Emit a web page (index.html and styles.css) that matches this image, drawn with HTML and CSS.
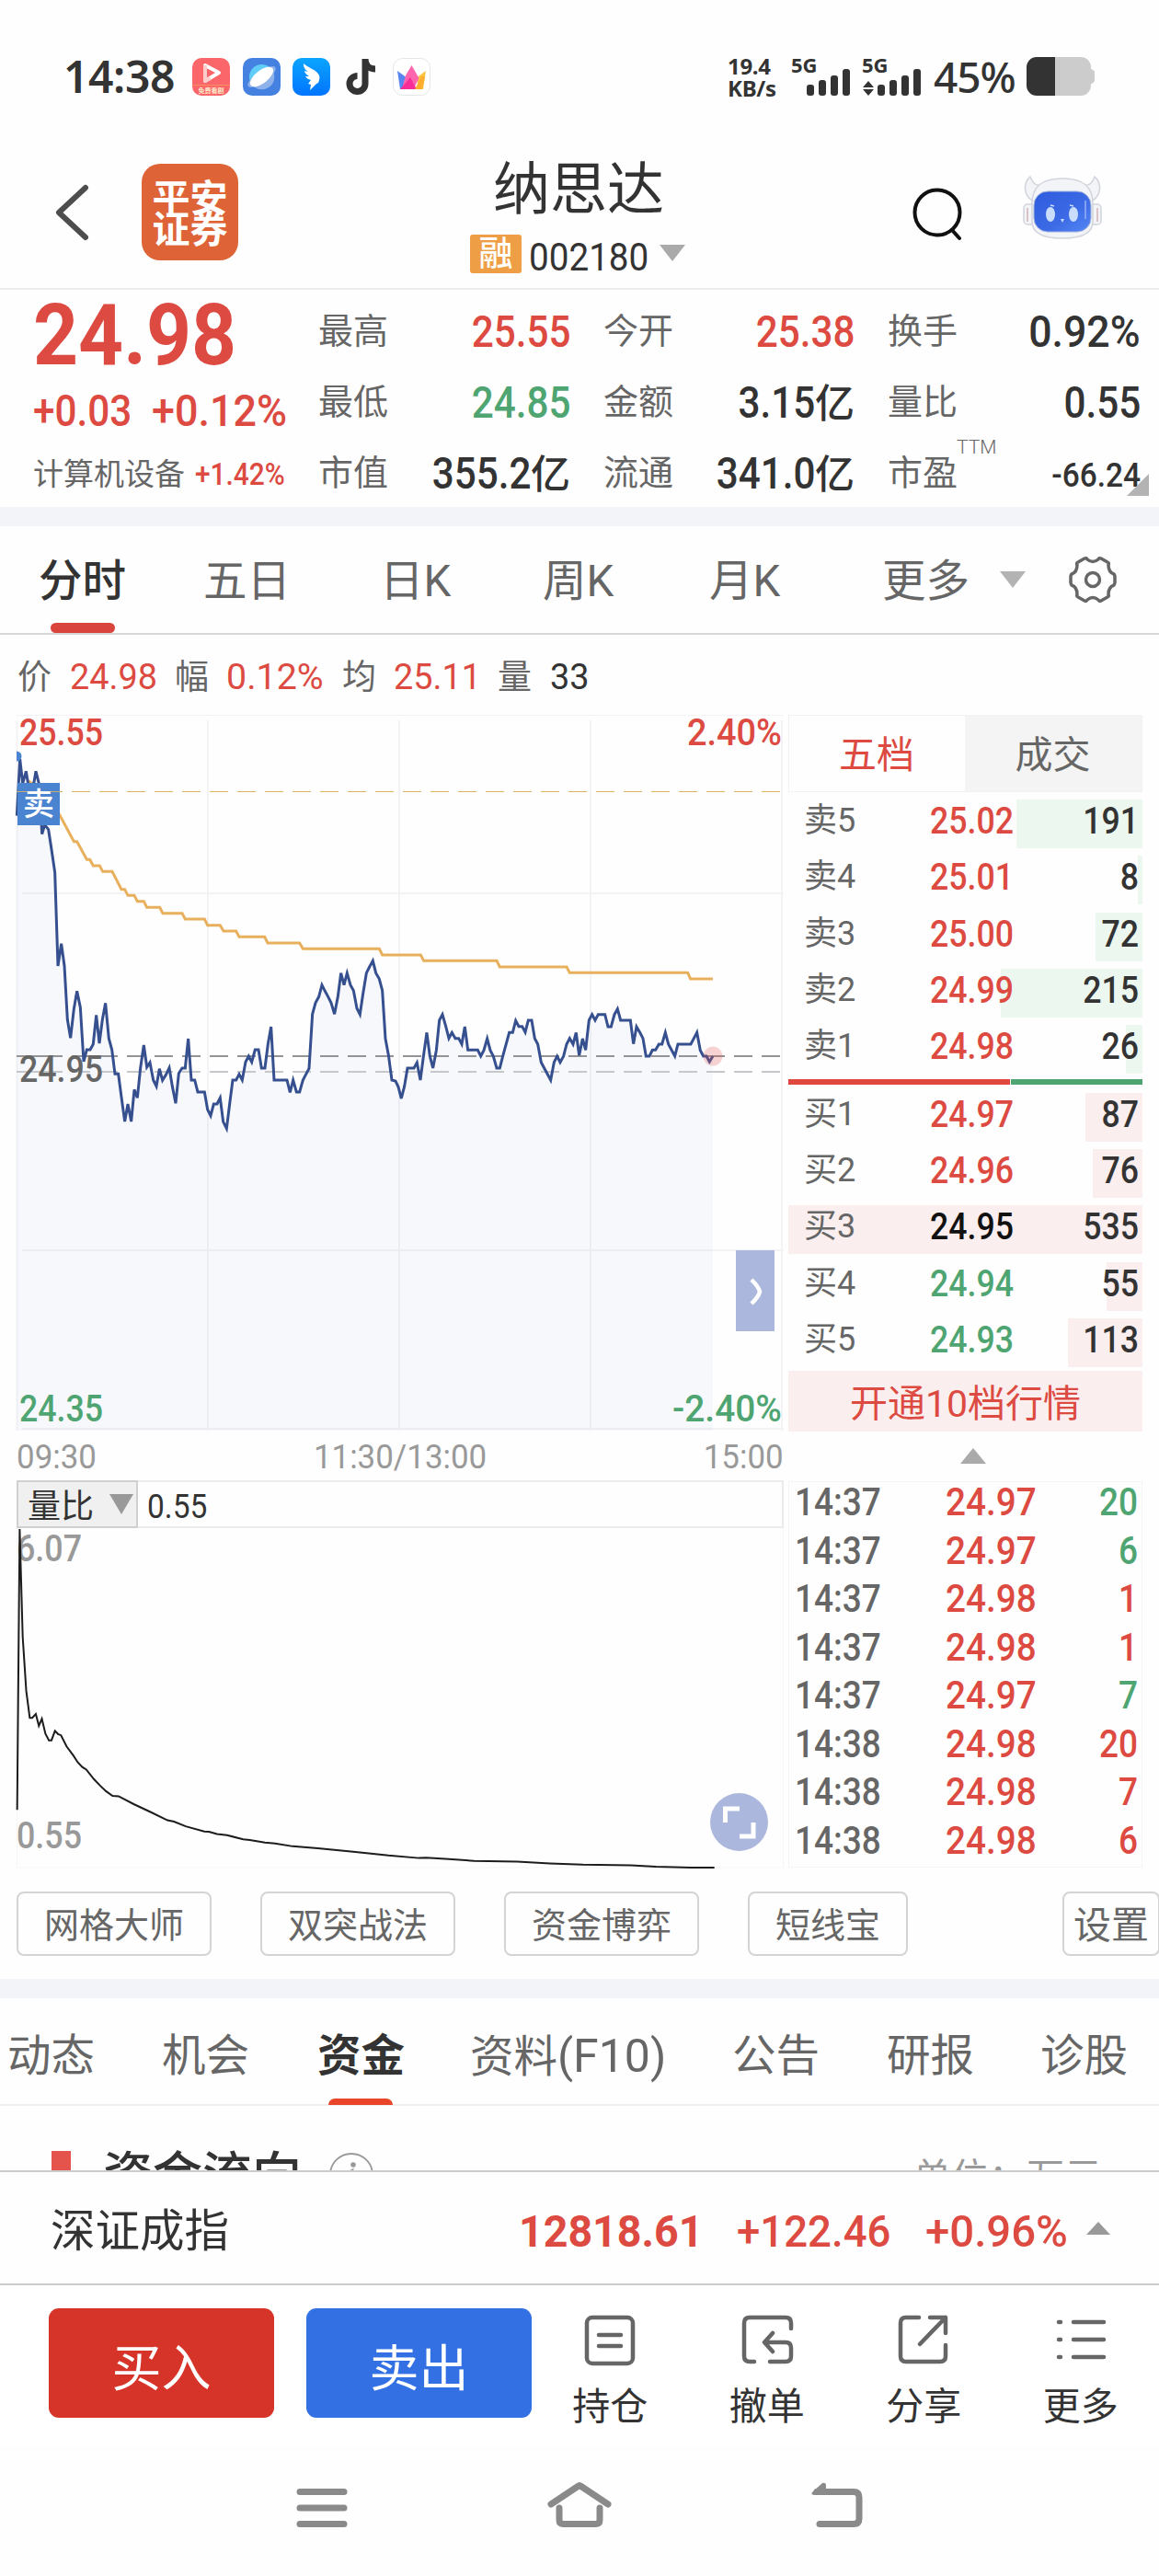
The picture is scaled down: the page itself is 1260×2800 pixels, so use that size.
FILE: index.html
```html
<!DOCTYPE html>
<html lang="zh-CN">
<head>
<meta charset="utf-8">
<title>纳思达 002180</title>
<link rel="stylesheet" href="styles.css">
</head>
<body>
<div class="status">
  <span class="clock">14:38</span>
  <div class="apps">
    <svg width="41" height="41" viewBox="0 0 41 41"><rect width="41" height="41" rx="10" fill="#fb666b"/><path d="M14 8l15 8-15 9z" fill="none" stroke="#fff" stroke-width="4" stroke-linejoin="round"/><path d="M14 8v17l6-3" fill="none" stroke="#fcc" stroke-width="4" stroke-linejoin="round"/><path d="M0 29.500h41" stroke="#f99060" stroke-width="1"/><text x="20.500" y="38" class="mini" text-anchor="middle">免费看剧</text></svg>
    <svg width="41" height="41" viewBox="0 0 41 41"><rect width="41" height="41" rx="10" fill="#4581e0"/><circle cx="20.500" cy="20.500" r="13.500" fill="#60cdf8"/><path d="M8 26L33 15a13.500 13.500 0 0 1-22 15z" fill="#8fb2ea"/><ellipse cx="20.500" cy="20.500" rx="18" ry="6" transform="rotate(-35 20.500 20.500)" fill="#8fb2ea"/><ellipse cx="20.500" cy="20.500" rx="15" ry="7" transform="rotate(-38 20.500 20.500)" fill="#fff"/></svg>
    <svg width="41" height="41" viewBox="0 0 41 41"><defs><linearGradient id="wing" x1="0" y1="0" x2="0" y2="1"><stop offset="0" stop-color="#0ba5ff"/><stop offset="1" stop-color="#0074ff"/></linearGradient></defs><rect width="41" height="41" rx="10" fill="url(#wing)"/><path d="M12 6c5 5 15 7 17 13 1 3 0 5-1 8l-2 1-7 7 1-6-3-1 3-4c-3-1-5-2-6-4l4 0c-3-2-5-4-5-6l4 1c-4-3-5-5-5-9z" fill="#fff"/></svg>
    <svg width="41" height="41" viewBox="0 0 41 41"><path d="M24 1v27a8.500 8.500 0 1 1-8.500-8.500M24 1c0 7 5 11 11 11" fill="none" stroke="#333" stroke-width="7"/></svg>
    <svg width="41" height="41" viewBox="0 0 41 41"><rect x=".5" y=".5" width="40" height="40" rx="10" fill="#fff" stroke="#e6e6e6"/><path d="M5 14l11 8-6 12H8z" fill="#5b86f2"/><path d="M36 14l-11 8 5 12h3z" fill="#fbc443"/><path d="M20.500 8l8 14-6 12H10l4-15z" fill="#ff66ae"/><path d="M8 34l11-13 7 13z" fill="#f72d9a"/><path d="M24 34l7-14 4 0-3 14z" fill="#ffad2f"/></svg>
  </div>
  <div class="rate"><span>19.4</span><span>KB/s</span></div>
  <svg class="signals" width="142" height="44" viewBox="860 61 142 44">
    <g fill="#333"><text x="860" y="79" class="gen">5G</text><rect x="877" y="92" width="8" height="12" rx="3"/><rect x="890" y="87" width="8" height="17" rx="3"/><rect x="903" y="82" width="8" height="22" rx="3"/><rect x="916" y="75" width="8" height="29" rx="3"/>
    <text x="937" y="79" class="gen">5G</text><path d="M938 95l6-7 6 7zM938 97h12l-6 7z"/><rect x="954" y="92" width="8" height="12" rx="3"/><rect x="967" y="87" width="8" height="17" rx="3"/><rect x="980" y="82" width="8" height="22" rx="3"/><rect x="993" y="75" width="8" height="29" rx="3"/></g>
  </svg>
  <span class="pct">45%</span>
  <svg width="74" height="42" viewBox="0 0 74 42"><path d="M11 0H31V42H11a11 11 0 0 1-11-11V11A11 11 0 0 1 11 0z" fill="#333"/><path d="M31 0H59a11 11 0 0 1 11 11v2q4 1 4 4v8q0 3-4 4v2a11 11 0 0 1-11 11H31z" fill="#ccc"/></svg>
</div>

<header class="head">
  <svg class="back" width="40" height="64" viewBox="0 0 40 64"><path d="M34 5L5 32l29 27" fill="none" stroke="#4d4d4d" stroke-width="6" stroke-linecap="round" stroke-linejoin="round"/></svg>
  <div class="logo"><span>平安</span><span>证券</span></div>
  <div class="title"><h1>纳思达</h1>
    <div class="code"><b>融</b><span class="n">002180</span><svg width="28" height="18" viewBox="0 0 28 18"><path d="M0 0h28L14 18z" fill="#aaa"/></svg></div>
  </div>
  <svg class="search" width="60" height="60" viewBox="0 0 60 60"><circle cx="28" cy="28" r="24.500" fill="none" stroke="#111" stroke-width="4"/><path d="M44 47l8 9" stroke="#111" stroke-width="4" stroke-linecap="round"/></svg>
  <svg class="robot" width="86" height="70" viewBox="0 0 86 70"><defs><linearGradient id="face" x1="0" y1="0" x2="1" y2="1"><stop offset="0" stop-color="#2d5bdd"/><stop offset=".6" stop-color="#3d6be6"/><stop offset="1" stop-color="#5588f5"/></linearGradient></defs>
    <g fill="#f3f4f8" stroke="#d2d4dc" stroke-width="1.500"><path d="M12 28C0 22 0 8 8 1c3 8 7 11 14 8zM74 28C86 22 86 8 78 1c-3 8-7 11-14 8z"/><rect x="1" y="31" width="12" height="22" rx="4"/><rect x="73" y="31" width="12" height="22" rx="4"/><path d="M43 3c24 0 33 10 33 27v20c0 12-12 18-33 18S10 62 10 50V30C10 13 19 3 43 3z"/></g>
    <path d="M5 35v15M81 35v15" stroke="#d9c3c6" stroke-width="2"/><rect x="12" y="17" width="62" height="44" rx="15" fill="url(#face)" stroke="#a5b4dd"/><path d="M68 27v20" stroke="#82a1f2" stroke-width="2"/><ellipse cx="30" cy="42" rx="5" ry="8" fill="#c9dcfb"/><ellipse cx="55" cy="42" rx="5" ry="8" fill="#c9dcfb"/><path d="M30 32l4 1M51 32l4 1" stroke="#c9dcfb" stroke-width="1.500"/><path d="M41 47h4l-2 4z" fill="#c9dcfb"/></svg>
</header>

<section class="quote">
  <div class="now red"><div class="last"><span class="n">24.98</span></div><div class="chg"><span class="n">+0.03</span><span class="n">+0.12%</span></div><div class="sector"><i>计算机设备</i><span class="n">+1.42%</span></div></div>
  <dl>
    <dt>最高</dt><dd class="red"><span class="n">25.55</span></dd><dt>今开</dt><dd class="red"><span class="n">25.38</span></dd><dt>换手</dt><dd><span class="n wide">0.92%</span></dd>
    <dt>最低</dt><dd class="green"><span class="n">24.85</span></dd><dt>金额</dt><dd><span class="n">3.15</span>亿</dd><dt>量比</dt><dd><span class="n">0.55</span></dd>
    <dt>市值</dt><dd><span class="n">355.2</span>亿</dd><dt>流通</dt><dd><span class="n">341.0</span>亿</dd><dt class="pe">市盈<sup>TTM</sup></dt><dd class="small"><span class="n wide">-66.24</span></dd>
  </dl>
  <svg class="corner" width="24" height="24" viewBox="0 0 24 24"><path d="M24 0v24H0z" fill="#b3b3b3"/></svg>
</section>
<div class="band"></div>

<nav class="periods">
  <span class="on">分时</span><span>五日</span><span>日K</span><span>周K</span><span>月K</span><span>更多</span>
  <svg class="drop" width="28" height="18" viewBox="0 0 28 18"><path d="M0 0h28L14 18z" fill="#b3b3b3"/></svg>
  <svg width="52" height="52" viewBox="0 0 52 52" fill="none" stroke="#666" stroke-width="3.500" stroke-linejoin="round"><path d="M17 3q2-1 3 1 6 5 12 0 1-2 3-1l7 4q2 1 1 3 0 8 6 10 1 1 1 3v6q0 2-1 3-6 2-6 10 1 2-1 3l-7 4q-2 1-3-1-6-5-12 0-1 2-3 1l-7-4q-2-1-1-3 0-8-6-10-1-1-1-3v-6q0-2 1-3 6-2 6-10-1-2 1-3z"/><circle cx="26" cy="26" r="7.500"/></svg>
</nav>
<div class="legend"><i>价</i><span class="n red">24.98</span><i>幅</i><span class="n red wide">0.12%</span><i>均</i><span class="n red">25.11</span><i>量</i><span class="n">33</span></div>

<main class="market">
  <div class="charts">
    <svg class="intraday" width="834" height="780" viewBox="18 776 834 780">
      <g stroke="#f3f3f5" stroke-width="2" fill="none"><path d="M18 777.500H852" stroke-width="1"/><path d="M24 971H852M24 1359H852M24 1553H852M226 783V1555M434 783V1555M642 783V1555M850 783V1555M18.500 783V1555"/></g>
      <g transform="translate(0 760) scale(.33333)">
        <path id="area" fill="#4478d0" fill-opacity=".045" d="M55 2385V380L65 195 74 275 85 235 94 290 106 300 117 235 127 275 137 440 146 410 158 425 168 490 179 565 189 870 200 797 210 870 220 1045 230 1105 241 1010 251 952 262 1005 273 1182 283 1143 294 1143 304 1125 314 1030 324 1122 334 1045 344 991 355 1106 365 1143 375 1222 386 1222 396 1298 407 1377 417 1320 428 1377 438 1273 448 1300 458 1203 469 1128 479 1200 489 1185 500 1242 510 1262 520 1205 530 1243 541 1225 552 1202 562 1262 573 1318 583 1220 594 1203 604 1203 614 1107 624 1242 635 1242 645 1281 667 1281 677 1338 687 1358 697 1320 708 1320 718 1300 728 1378 739 1400 749 1320 759 1242 770 1242 780 1223 790 1242 801 1183 811 1164 821 1183 832 1143 843 1143 853 1203 864 1203 874 1125 884 1068 894 1242 936 1242 946 1282 956 1242 967 1281 977 1281 988 1242 998 1223 1008 1204 1019 1027 1029 990 1040 970 1050 932 1060 952 1070 970 1080 990 1091 1027 1102 970 1112 893 1122 932 1132 893 1143 932 1153 950 1164 1008 1174 1028 1184 960 1195 893 1205 873 1216 853 1226 893 1237 912 1247 950 1257 1107 1267 1160 1278 1242 1290 1245 1299 1264 1309 1302 1319 1262 1329 1203 1350 1203 1360 1185 1371 1242 1381 1165 1392 1087 1402 1164 1412 1203 1423 1145 1433 1047 1443 1028 1454 1067 1464 1106 1474 1087 1485 1106 1496 1106 1506 1125 1516 1068 1526 1144 1558 1144 1568 1164 1578 1145 1589 1107 1599 1145 1609 1164 1620 1203 1630 1203 1640 1164 1661 1087 1672 1087 1682 1048 1692 1067 1703 1067 1713 1086 1723 1047 1734 1047 1744 1106 1754 1125 1765 1184 1775 1203 1796 1242 1807 1184 1817 1164 1827 1184 1838 1164 1848 1125 1858 1106 1869 1125 1879 1087 1889 1162 1900 1107 1910 1144 1921 1047 1931 1028 1941 1047 1951 1028 1973 1028 1983 1068 1993 1068 2004 1028 2014 1010 2024 1047 2056 1047 2066 1124 2076 1068 2087 1087 2097 1106 2107 1164 2118 1164 2128 1144 2138 1144 2149 1125 2159 1125 2170 1087 2180 1125 2201 1164 2211 1125 2253 1125 2263 1106 2273 1087 2284 1145 2294 1164 2304 1164 2314 1182 2325 1164V2385z"/>
      </g>
      <g stroke-width="1.200" stroke="#dcb462"><path d="M18 860.500H68"/><path d="M78 860.500H850" stroke-dasharray="20 10"/></g>
      <g stroke-width="2" stroke="#949496"><path d="M18 1148H68"/><path d="M78 1148H850" stroke-dasharray="20 10"/></g>
      <g stroke-width="2" stroke="#c6c7ca"><path d="M18 1165H68"/><path d="M78 1165H850" stroke-dasharray="20 10"/></g>
      <g transform="translate(0 760) scale(.33333)" fill="none" stroke-width="9">
        <path stroke="#e8b05c" d="M90 265L105 275 150 310 195 378 241 464 251 464 283 523 293 523 304 543 325 543 335 562 366 562 396 620 407 620 417 640 438 640 448 659 469 659 479 679 521 679 531 698 594 698 604 717 667 717 677 737 718 737 729 756 770 756 780 775 863 775 873 795 977 795 988 814 1237 814 1247 834 1372 834 1382 853 1620 853 1630 873 1848 873 1858 892 2243 892 2252 912 2325 912"/>
        <path stroke="#36508f" d="M55 380L65 195 74 275 85 235 94 290 106 300 117 235 127 275 137 440 146 410 158 425 168 490 179 565 189 870 200 797 210 870 220 1045 230 1105 241 1010 251 952 262 1005 273 1182 283 1143 294 1143 304 1125 314 1030 324 1122 334 1045 344 991 355 1106 365 1143 375 1222 386 1222 396 1298 407 1377 417 1320 428 1377 438 1273 448 1300 458 1203 469 1128 479 1200 489 1185 500 1242 510 1262 520 1205 530 1243 541 1225 552 1202 562 1262 573 1318 583 1220 594 1203 604 1203 614 1107 624 1242 635 1242 645 1281 667 1281 677 1338 687 1358 697 1320 708 1320 718 1300 728 1378 739 1400 749 1320 759 1242 770 1242 780 1223 790 1242 801 1183 811 1164 821 1183 832 1143 843 1143 853 1203 864 1203 874 1125 884 1068 894 1242 936 1242 946 1282 956 1242 967 1281 977 1281 988 1242 998 1223 1008 1204 1019 1027 1029 990 1040 970 1050 932 1060 952 1070 970 1080 990 1091 1027 1102 970 1112 893 1122 932 1132 893 1143 932 1153 950 1164 1008 1174 1028 1184 960 1195 893 1205 873 1216 853 1226 893 1237 912 1247 950 1257 1107 1267 1160 1278 1242 1290 1245 1299 1264 1309 1302 1319 1262 1329 1203 1350 1203 1360 1185 1371 1242 1381 1165 1392 1087 1402 1164 1412 1203 1423 1145 1433 1047 1443 1028 1454 1067 1464 1106 1474 1087 1485 1106 1496 1106 1506 1125 1516 1068 1526 1144 1558 1144 1568 1164 1578 1145 1589 1107 1599 1145 1609 1164 1620 1203 1630 1203 1640 1164 1661 1087 1672 1087 1682 1048 1692 1067 1703 1067 1713 1086 1723 1047 1734 1047 1744 1106 1754 1125 1765 1184 1775 1203 1796 1242 1807 1184 1817 1164 1827 1184 1838 1164 1848 1125 1858 1106 1869 1125 1879 1087 1889 1162 1900 1107 1910 1144 1921 1047 1931 1028 1941 1047 1951 1028 1973 1028 1983 1068 1993 1068 2004 1028 2014 1010 2024 1047 2056 1047 2066 1124 2076 1068 2087 1087 2097 1106 2107 1164 2118 1164 2128 1144 2138 1144 2149 1125 2159 1125 2170 1087 2180 1125 2201 1164 2211 1125 2253 1125 2263 1106 2273 1087 2284 1145 2294 1164 2304 1164 2314 1182 2325 1164"/>
      </g>
      <circle cx="775" cy="1148" r="10.500" fill="#e25050" fill-opacity=".25"/>
      <path d="M18 816.500a5.500 5.500 0 0 1 0 11z" fill="#4a83cf"/>
      <rect x="19" y="851" width="46" height="46" fill="#4a83cf"/><path d="M18 860.500H68" stroke="#c8ab74"/>
      <text x="42" y="886" class="sell" text-anchor="middle">卖</text>
      <g class="num"><text x="21" y="809.500" fill="#dc4a41" textLength="91" lengthAdjust="spacingAndGlyphs">25.55</text><text x="747" y="809.500" fill="#dc4a41" textLength="103" lengthAdjust="spacingAndGlyphs">2.40%</text><text x="21" y="1176" fill="#666" textLength="91" lengthAdjust="spacingAndGlyphs">24.95</text><text x="21" y="1544.500" fill="#4fa572" textLength="91" lengthAdjust="spacingAndGlyphs">24.35</text><text x="731" y="1544.500" fill="#4fa572" textLength="119" lengthAdjust="spacingAndGlyphs">-2.40%</text></g>
      <rect x="800" y="1359" width="42" height="88" fill="#abb7dc"/><path d="M817 1391q8 8 9 13-1 5-9 13" fill="none" stroke="#fff" stroke-width="4.500"/>
    </svg>
    <div class="times"><span class="n">09:30</span><span class="n">11:30/13:00</span><span class="n">15:00</span></div>
    <div class="indicator"><div class="pick"><span>量比</span><svg width="26" height="22" viewBox="0 0 26 22"><path d="M0 0h26L13 22z" fill="#999"/></svg></div><span class="n">0.55</span></div>
    <svg class="ratio" width="834" height="370" viewBox="18 1661 834 370">
      <path d="M18.500 1661V2030H851.500V1661" fill="none" stroke="#f5f5f5"/>
      <g class="num" fill="#999"><text x="18" y="1697" textLength="71" lengthAdjust="spacingAndGlyphs">6.07</text><text x="18" y="2009" textLength="71" lengthAdjust="spacingAndGlyphs">0.55</text></g>
      <g transform="translate(0 1600) scale(.5485 .3448)"><path vector-effect="non-scaling-stroke" fill="none" stroke="#1c1c1c" stroke-width="2" d="M34 1065L39 180 45 520 52 690 59 775 64 775 71 763 77 800 83 778 90 825 97 846 102 846 109 816 115 826 121 830 132 865 145 893 154 915 163 930 171 938 186 968 198 988 210 1006 223 1021 235 1022 265 1047 300 1073 332 1098 345 1102 368 1117 405 1133 414 1134 430 1141 450 1145 482 1158 495 1160 525 1168 545 1171 580 1180 630 1186 700 1197 770 1209 830 1217 845 1216 890 1220 940 1226 1025 1228 1090 1234 1155 1238 1250 1240 1300 1244 1370 1247 1416 1247"/></g>
      <circle cx="803.500" cy="1980.500" r="31.500" fill="#abb7dc"/><path d="M788.500 1981v-15H804M819 1981v15H804" fill="none" stroke="#fff" stroke-width="5"/>
    </svg>
  </div>

  <aside class="side">
    <div class="booktabs"><span class="on">五档</span><span>成交</span></div>
    <div class="book">
      <div class="lv s"><i>卖5</i><span class="n red">25.02</span><span class="n q">191</span><em style="width:137px"></em></div>
      <div class="lv s"><i>卖4</i><span class="n red">25.01</span><span class="n q">8</span><em style="width:5px"></em></div>
      <div class="lv s"><i>卖3</i><span class="n red">25.00</span><span class="n q">72</span><em style="width:51px"></em></div>
      <div class="lv s"><i>卖2</i><span class="n red">24.99</span><span class="n q">215</span><em style="width:154px"></em></div>
      <div class="lv s"><i>卖1</i><span class="n red">24.98</span><span class="n q">26</span><em style="width:18px"></em></div>
      <div class="split"><b></b><u></u></div>
      <div class="lv b"><i>买1</i><span class="n red">24.97</span><span class="n q">87</span><em style="width:62px"></em></div>
      <div class="lv b"><i>买2</i><span class="n red">24.96</span><span class="n q">76</span><em style="width:54px"></em></div>
      <div class="lv b"><i>买3</i><span class="n black">24.95</span><span class="n q">535</span><em style="width:385px"></em></div>
      <div class="lv b"><i>买4</i><span class="n green">24.94</span><span class="n q">55</span><em style="width:39px"></em></div>
      <div class="lv b"><i>买5</i><span class="n green">24.93</span><span class="n q">113</span><em style="width:81px"></em></div>
    </div>
    <div class="more10">开通10档行情</div>
    <div class="fold"><svg width="28" height="17" viewBox="0 0 28 17"><path d="M0 17h28L14 0z" fill="#aaa"/></svg></div>
    <div class="ticks">
      <div><span class="n">14:37</span><span class="n red">24.97</span><span class="n green">20</span></div>
      <div><span class="n">14:37</span><span class="n red">24.97</span><span class="n green">6</span></div>
      <div><span class="n">14:37</span><span class="n red">24.98</span><span class="n red">1</span></div>
      <div><span class="n">14:37</span><span class="n red">24.98</span><span class="n red">1</span></div>
      <div><span class="n">14:37</span><span class="n red">24.97</span><span class="n green">7</span></div>
      <div><span class="n">14:38</span><span class="n red">24.98</span><span class="n red">20</span></div>
      <div><span class="n">14:38</span><span class="n red">24.98</span><span class="n red">7</span></div>
      <div><span class="n">14:38</span><span class="n red">24.98</span><span class="n red">6</span></div>
    </div>
  </aside>
</main>

<div class="tools"><span>网格大师</span><span>双突战法</span><span>资金博弈</span><span class="short">短线宝</span><span class="set">设置</span></div>
<div class="band"></div>
<nav class="topics"><span>动态</span><span>机会</span><span class="on">资金</span><span class="f10">资料<span class="n">(F10)</span></span><span>公告</span><span>研报</span><span>诊股</span></nav>
<section class="flow"><b></b><h2>资金流向</h2><svg width="50" height="50" viewBox="0 0 50 50"><circle cx="25" cy="25" r="23" fill="none" stroke="#999" stroke-width="1.800"/><circle cx="27" cy="14" r="2.800" fill="#999"/><path d="M21 23l5-3-3 15 5-3" fill="none" stroke="#999" stroke-width="2.500"/></svg><span class="unit">单位：万元</span></section>
<section class="index"><span class="name">深证成指</span><span class="n bold">12818.61</span><span class="n">+122.46</span><span class="n wide">+0.96%</span><svg width="26" height="14" viewBox="0 0 26 14"><path d="M0 14h26L13 0z" fill="#999"/></svg></section>
<footer class="actions">
  <button class="buy">买入</button><button class="sellbtn">卖出</button>
  <div class="links">
  <a><svg width="60" height="60" viewBox="0 0 60 60"><rect x="5" y="5" width="50" height="50" rx="6"/><path d="M18 24h24M18 36h24"/></svg>持仓</a>
  <a><svg width="60" height="60" viewBox="0 0 60 60"><path d="M56 17v-6q0-6-6-6H11Q5 5 5 11v36q0 6 6 6h5M33 53h17q6 0 6-6V38q0-6-6-6H27M36 22l-9 10 9 10"/></svg>撤单</a>
  <a><svg width="60" height="60" viewBox="0 0 60 60"><path d="M25 5H11Q5 5 5 11v36q0 6 6 6h37q6 0 6-6V35M37 5h17v17M54 5L26 34"/></svg>分享</a>
  <a><svg width="60" height="60" viewBox="0 0 60 60"><path d="M6 10h2M22 10h33M6 29h2M22 29h33M6 48h2M22 48h33"/></svg>更多</a>
  </div>
</footer>
<nav class="sys">
  <svg width="70" height="54" viewBox="0 0 70 54"><path d="M11 13.500h48M11 31h48M11 48.500h48"/></svg>
  <svg width="70" height="54" viewBox="0 0 70 54"><path d="M4 27L34 7q1-1 2 0l30 20M13 31v13q0 4.500 4.500 4.500h35q4.500 0 4.500-4.500V31"/></svg>
  <svg width="70" height="54" viewBox="0 0 70 54"><path d="M16 48.500H53q6 0 6-6V19.500q0-6-6-6H13"/><path d="M8 14l11-10q4-1 4 3v10H11q-5 0-3-3z" fill="#8a8a8a" stroke="none"/></svg>
</nav>
</body>
</html>
```

FILE: styles.css
```css
* { box-sizing: border-box; }
body { margin: 0; width: 1260px; height: 2800px; overflow: hidden; background: #fefefe; color: #333; font-family: Roboto, "Noto Sans CJK SC", sans-serif; font-size: 38px; }
i, em { font-style: normal; }
svg { display: block; flex: none; overflow: visible; }
.n { display: inline-block; transform: scaleX(.87); transform-origin: left; font-weight: 500; white-space: nowrap; }
.red { color: #dc4a41; }
.green { color: #4fa572; }
.black { color: #111; }
.band { height: 21px; background: #f3f4f9; }
.num { font-family: Roboto, sans-serif; font-size: 41px; font-weight: 500; }

.status { height: 150px; padding: 62px 70px 0 69px; display: flex; font-family: "Noto Sans", sans-serif; }
.clock { width: 140px; font-size: 48px; font-weight: 600; line-height: 42px; letter-spacing: -.4px; }
.apps { display: flex; gap: 13.600px; padding-top: 1px; width: 582px; }
.mini { font: 700 7px "Noto Sans CJK SC", sans-serif; fill: #ffe9c8; }
.rate { width: 69px; display: flex; flex-direction: column; font-size: 24px; font-weight: 700; line-height: 24px; margin-top: -2px; letter-spacing: -.3px; }
.signals { margin-top: -1px; }
.gen { font: 700 22px "Noto Sans", sans-serif; }
.pct { width: 114px; padding-left: 13px; font-size: 46px; font-weight: 500; line-height: 42px; letter-spacing: -1px; }

.head { height: 165px; border-bottom: 2px solid #ebebeb; padding-left: 59px; display: flex; align-items: flex-start; }
.back { margin-top: 49px; }
.logo { margin: 28px 0 0 55px; padding-top: 5px; width: 105px; height: 105px; border-radius: 20px; background: #de6437; color: #fff; font-size: 41px; font-weight: 700; line-height: 34px; display: flex; flex-direction: column; align-items: center; justify-content: center; }
.title { margin-left: 252px; width: 362px; padding-top: 26px; }
h1 { margin: 0 0 0 25px; font-size: 62px; line-height: 62px; font-weight: 400; }
.code { display: flex; margin-top: 17px; height: 42px; line-height: 42px; font-size: 42px; }
.code b { width: 56px; background: #ee9f45; color: #fff; border-radius: 3px; text-align: center; font-size: 37px; font-weight: 500; line-height: 43px; margin-right: 8px; }
.code .n { width: 142px; font-weight: 400; transform: scaleX(.92); line-height: 50px; }
.code svg { margin-top: 11px; }
.search { margin: 53px 0 0 118px; }
.robot { margin: 41px 0 0 61px; }

.quote { height: 236px; position: relative; display: flex; padding-left: 36px; }
.now { width: 310px; }
.last { font-size: 93px; line-height: 96px; margin-top: 2px; }
.last .n { font-weight: 700; transform: scaleX(.92); }
.chg { display: flex; font-size: 48px; line-height: 67px; }
.chg .n { width: 129px; transform: scaleX(.88); }
.chg .n:last-child { transform: scaleX(.935); }
.sector { display: flex; font-size: 33px; line-height: 51px; margin-top: 10px; }
.sector i { color: #666; width: 176px; }
.sector .n { transform: scaleX(.905); }
dl { margin: 9px 0 0; display: grid; grid-template-columns: 75px 235px 75px 234px 75px 200px; grid-auto-rows: 77px; line-height: 73px; width: 894px; }
dt { color: #666; white-space: nowrap; }
dd { margin: 0; text-align: right; font-size: 43px; font-weight: 500; }
dd:nth-of-type(3n+1), dd:nth-of-type(3n+2) { padding-right: 36px; }
dd .n { font-size: 48px; transform: scaleX(.88); transform-origin: right; }
dd .n.wide { transform: scaleX(.93); }
dd.small .n { font-size: 36px; }
dt.pe { position: relative; }
sup { position: absolute; left: 75px; top: -4px; font-size: 21px; line-height: 24px; font-weight: 300; }
.corner { position: absolute; right: 11px; bottom: 12px; }

.periods { height: 118px; border-bottom: 2px solid #d6d6d6; display: grid; grid-template-columns: 179px 192px 177px 181px 188px 128px 75px 60px; padding-left: 42px; font-size: 47.500px; line-height: 120px; color: #666; align-items: start; }
.periods .on { color: #333; font-weight: 500; position: relative; }
.periods .on::after { content: ""; position: absolute; left: 13px; top: 105px; width: 70px; height: 11px; border-radius: 6px; background: #d9453d; }
.periods .drop { margin-top: 49px; }
.periods svg:last-child { margin-top: 32px; }
.legend { height: 86px; display: grid; grid-template-columns: 57px 114px 56px 126px 56px 113px 57px 60px; padding-left: 19px; line-height: 93px; font-size: 38px; color: #666; }
.legend i { font-size: 37px; }
.legend .n { font-size: 39px; font-weight: 400; transform: scaleX(.97); }
.legend .wide { transform: scaleX(1.01); }
.legend .red { color: #dc4a41; }
.legend .n:last-child { color: #333; }

.market { display: flex; gap: 5px; padding-left: 18px; height: 1254px; }
.charts { width: 834px; }
.sell { font: 500 34px "Noto Sans CJK SC", sans-serif; fill: #fff; }
.times { height: 53px; display: flex; justify-content: space-between; font-size: 36px; line-height: 56px; color: #999; }
.times .n { font-weight: 400; transform: scaleX(.97); }
.times .n:nth-child(2) { transform-origin: center; }
.times .n:last-child { transform-origin: right; }
.indicator { height: 52px; border: 2px solid #ebebeb; display: flex; line-height: 54px; }
.pick { width: 132px; margin: -2px 10px -2px -2px; border: 2px solid #d0d0d0; background: #f0f0f0; padding-left: 10px; font-size: 36px; display: flex; gap: 17px; }
.pick svg { margin-top: 13px; }
.indicator .n { font-size: 36px; font-weight: 400; transform: scaleX(.93); line-height: 55px; }

.side { width: 385px; }
.booktabs { height: 84px; margin-top: 1px; display: flex; font-size: 41px; line-height: 86px; text-align: center; color: #666; border: 1px solid #f2f2f2; }
.booktabs .on { width: 191px; color: #dc4a41; background: #fefefe; }
.booktabs span { width: 192px; background: #f4f4f4; padding-right: 1px; }
.book { padding-top: 8px; }
.lv { height: 53px; margin-bottom: 8.350px; position: relative; display: grid; grid-template-columns: 154px 100px 127px; padding-left: 0; }
.lv i { padding-left: 17px; font-size: 36px; color: #666; line-height: 47px; z-index: 1; }
.lv .n { font-size: 41px; line-height: 46px; z-index: 1; }
.lv .q { text-align: right; transform-origin: right; }
.lv em { position: absolute; right: 0; top: 0; height: 53px; }
.s em { background: #ecf7f0; }
.b em { background: #fbeeef; }
.split { display: flex; gap: 1px; height: 6px; margin: -3px 0 9px; }
.split b { width: 241px; background: #e0483f; }
.split u { flex: 1; background: #4fa572; }
.more10 { height: 66px; margin-top: -4px; background: #fbeeef; color: #dc4a41; text-align: center; font-size: 41px; line-height: 72px; }
.fold { height: 54px; padding: 18px 0 0 187px; }
.ticks { height: 420px; border: 1px solid #f4f4f4; color: #666; }
.ticks div { height: 52.500px; display: grid; grid-template-columns: 164px 100px 109px; padding-left: 6px; font-size: 42.500px; line-height: 44px; }
.ticks .n:nth-child(2) { transform: scaleX(.91); }
.ticks .n:last-child { text-align: right; transform-origin: right; }

.tools { height: 121px; padding: 26px 0 0 18px; display: flex; gap: 53px; font-size: 38px; color: #666; }
.tools span { width: 212px; height: 70px; border: 2px solid #d4d4d4; border-radius: 8px; text-align: center; line-height: 71px; flex: none; }
.tools .short { width: 174px; }
.tools .set { width: 106px; font-size: 41px; margin-left: 115px; }
.topics { height: 117px; border-bottom: 2px solid #f0f0f0; display: grid; grid-template-columns: 168px 169px 166px 285px 168px 167px 110px; padding-left: 8px; font-size: 47.500px; line-height: 127px; color: #666; }
.topics .on { color: #333; font-weight: 700; position: relative; }
.topics .on::after { content: ""; position: absolute; left: 12px; top: 109px; width: 70px; height: 7px; border-radius: 8px 8px 0 0; background: #e8452a; }
.topics .n { font-weight: 400; font-size: 50px; transform: scaleX(1); }
.flow { height: 70px; overflow: hidden; display: flex; padding-left: 56px; }
.flow b { width: 21px; height: 44px; margin-top: 49px; background: #e5534d; }
h2 { margin: 47px 0 0 35px; width: 245px; font-size: 54px; line-height: 60px; font-weight: 500; white-space: nowrap; }
.flow svg { margin-top: 50px; }
.unit { margin: 55px 0 0 586px; font-size: 41px; line-height: 46px; color: #999; white-space: nowrap; }
.index { height: 125px; border-top: 2px solid #ccc; border-bottom: 2px solid #ccc; display: grid; grid-template-columns: 509px 237px 205px 175px 30px; padding-left: 55px; font-size: 49px; line-height: 129px; color: #dc4a41; }
.index .name { color: #333; font-size: 48.500px; line-height: 130px; }
.index .n { transform: scaleX(.93); }
.index .bold { font-weight: 700; transform: scaleX(.95); }
.index .n.wide { transform: scaleX(.965); }
.index svg { margin-top: 54px; }
.actions { height: 175px; padding: 25px 0 0 53px; display: flex; gap: 35px; background: #fff; }
button { width: 245px; height: 119px; border: 0; border-radius: 11px; padding: 4px 0 0; font: 400 54px "Noto Sans CJK SC", sans-serif; color: #fff; }
.buy { background: #d63429; }
.sellbtn { background: #3270e3; }
.links { display: flex; margin-left: -35px; }
.links a { width: 170.500px; display: flex; flex-direction: column; align-items: center; padding-top: 5px; font-size: 41px; line-height: 84px; height: 150px; }
.links svg { fill: none; stroke: #666; stroke-width: 4.500; stroke-linecap: round; stroke-linejoin: round; }
.sys { flex: none; display: flex; justify-content: center; gap: 210px; padding-top: 36px; }
.sys svg { fill: none; stroke: #8a8a8a; stroke-width: 7; stroke-linecap: round; stroke-linejoin: round; }
```
